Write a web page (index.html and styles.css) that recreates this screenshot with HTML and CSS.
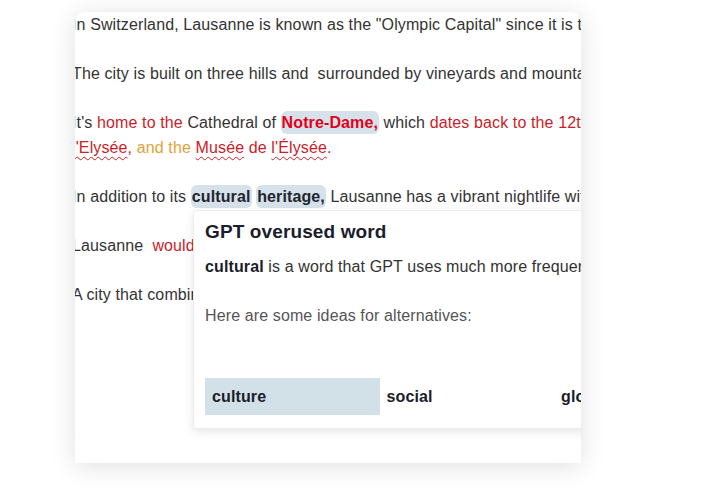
FILE: index.html
```html
<!DOCTYPE html>
<html lang="en">
<head>
<meta charset="utf-8">
<title>Lausanne</title>
<link rel="stylesheet" href="styles.css">
</head>
<body>
<div class="card">
  <div class="content">
    <p>In Switzerland, Lausanne is known as the "Olympic Capital" since it is the home of the International Olympic Committee.</p>
    <p>The city is built on three hills and&nbsp; surrounded by vineyards and mountains, with views over Lake Geneva.</p>
    <p>It's <span class="red">home to the</span> Cathedral of <span class="chip red-strong">Notre-Dame,</span> which <span class="red">dates back to the 12th century, as well as the Palais de Rumine and the Fondation de</span><br><span class="red"><span class="wavy">l'Elysée</span>,</span> <span class="orange">and the</span> <span class="red"><span class="wavy">Musée</span> de <span class="wavy">l'Élysée</span>.</span></p>
    <p>In addition to its <span class="chip bold">cultural</span> <span class="chip bold">heritage,</span> Lausanne has a vibrant nightlife with many bars and clubs.</p>
    <p>Lausanne&nbsp; <span class="red">would be a great place to visit for anyone.</span></p>
    <p>A city that combines history, culture and nature.</p>
  </div>
  <div class="popup">
    <h2 class="popup-title">GPT overused word</h2>
    <p class="popup-text"><b>cultural</b> is a word that GPT uses much more frequently than humans do.</p>
    <p class="popup-hint">Here are some ideas for alternatives:</p>
    <div class="alts">
      <div class="alt active">culture</div>
      <div class="alt">social</div>
      <div class="alt">global</div>
    </div>
  </div>
</div>
</body>
</html>
```
FILE: styles.css
```css
html, body {
  margin: 0;
  padding: 0;
  background: #ffffff;
}
body {
  font-family: "Liberation Sans", Arial, sans-serif;
  font-size: 16px;
  letter-spacing: 0.12px;
  color: #333333;
  padding: 12px 0 0 75px;
  height: 500px;
  box-sizing: border-box;
  overflow: hidden;
}
.card {
  position: relative;
  width: 506px;
  height: 451px;
  background: #ffffff;
  border-radius: 10px 10px 0 0;
  box-shadow: 0 3px 26px rgba(0, 0, 0, 0.13);
  overflow: hidden;
}
.content {
  margin-left: -3px;
  width: 1000px;
  white-space: nowrap;
}
.content p {
  margin: 0 0 24px 0;
  line-height: 25px;
}
.red { color: #c81e2a; }
.red-strong { color: #e3001b; font-weight: bold; }
.orange { color: #e3a23a; }
.bold { font-weight: bold; color: #1f2530; }
.chip {
  background: #d6e1e9;
  border-radius: 6px;
  padding: 3px 1px;
}
.wavy {
  text-decoration: underline wavy #d0202a;
  text-decoration-thickness: 1px;
  text-underline-offset: 3px;
}
.popup {
  position: absolute;
  left: 118px;
  top: 198px;
  width: 548px;
  background: #ffffff;
  border: 1px solid #ececec;
  border-radius: 4px;
  box-shadow: 0 3px 10px rgba(0, 0, 0, 0.10);
  padding: 8px 12px 13px 11px;
  box-sizing: border-box;
}
.popup-title {
  margin: 0;
  font-size: 19px;
  line-height: 26px;
  font-weight: bold;
  color: #1b1d2b;
}
.popup-text {
  margin: 12px 0 0 0;
  line-height: 20px;
  color: #333333;
  white-space: nowrap;
}
.popup-text b { color: #1b1d2b; }
.popup-hint {
  margin: 29px 0 0 0;
  line-height: 20px;
  color: #555555;
}
.alts {
  margin-top: 52px;
  display: grid;
  grid-template-columns: repeat(3, 174.5px);
}
.alt {
  padding: 0 7px;
  height: 37px;
  line-height: 37px;
  font-weight: bold;
  color: #1b1d2b;
  white-space: nowrap;
}
.alt.active {
  background: #d2e0e7;
}
```
